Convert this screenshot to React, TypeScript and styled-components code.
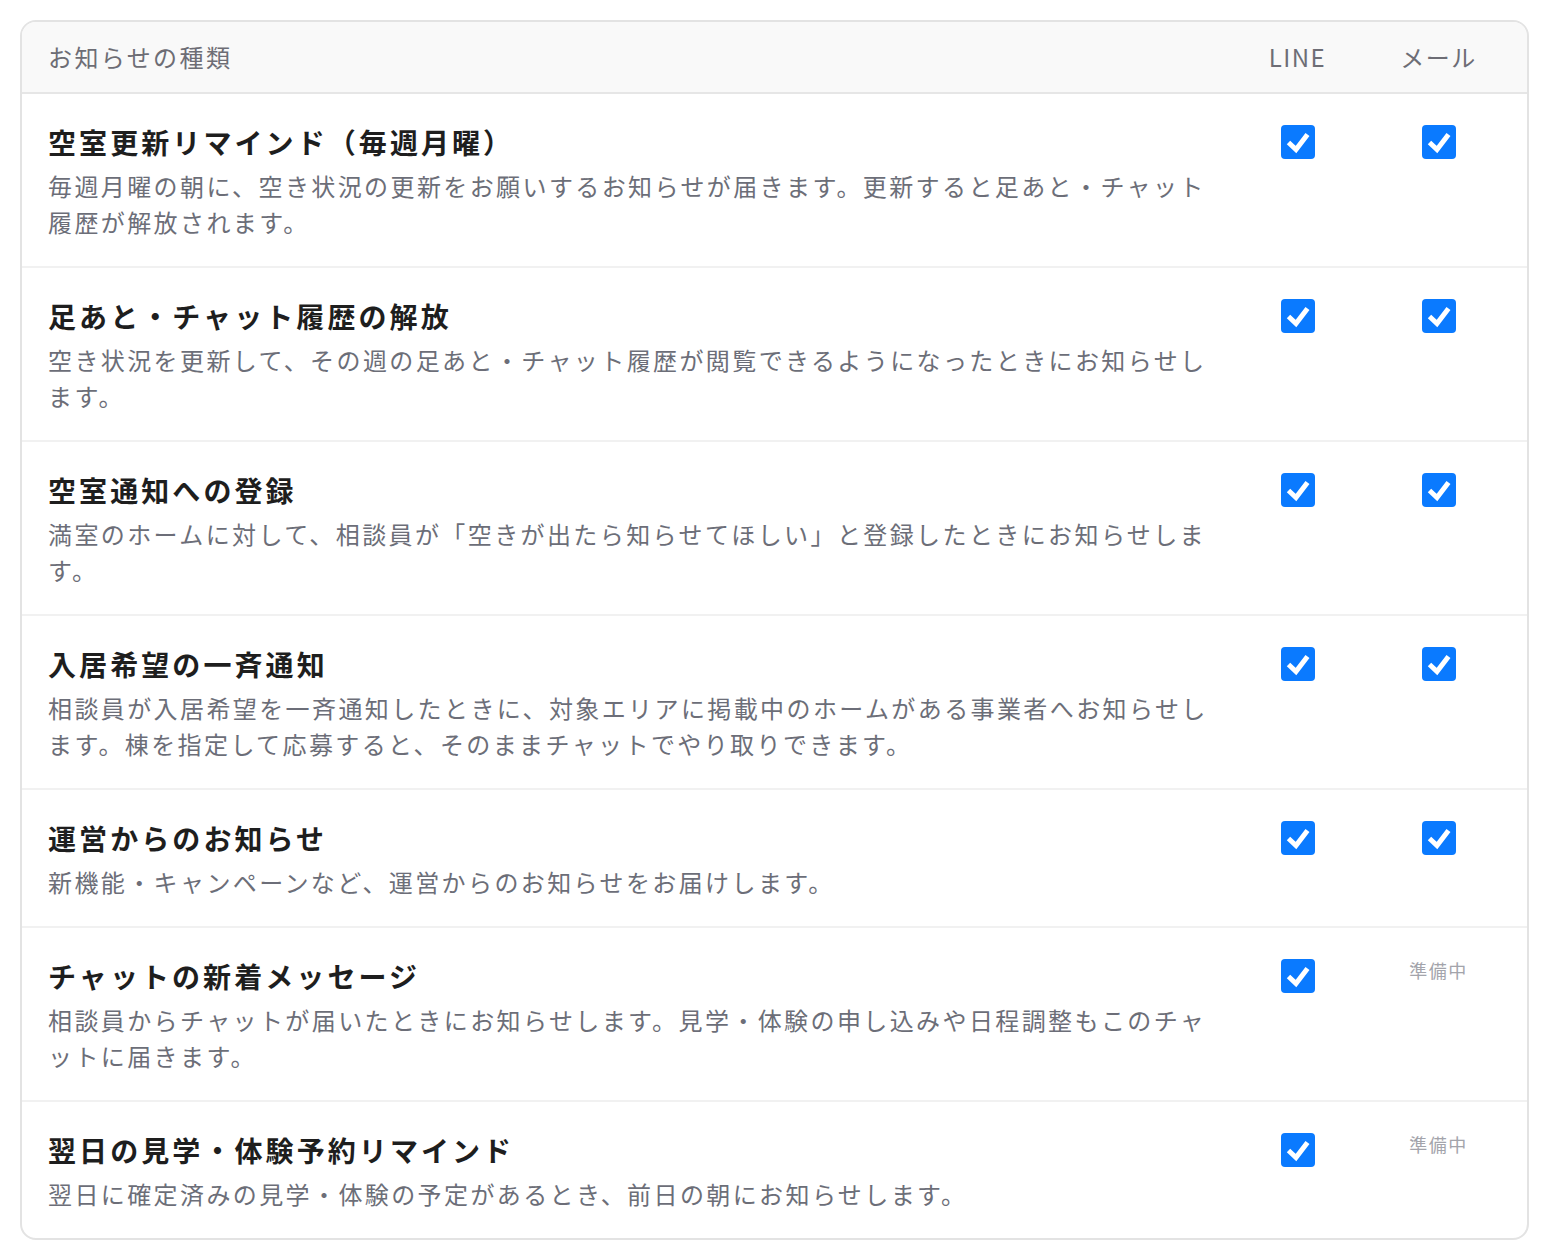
import React from "react";
import styled, { createGlobalStyle } from "styled-components";

const GlobalStyle = createGlobalStyle`
  html, body {
    margin: 0;
    padding: 0;
    background: #ffffff;
  }
  body {
    font-family: "Noto Sans CJK JP", "Noto Sans", sans-serif;
    -webkit-font-smoothing: antialiased;
  }
`;

const Page = styled.div`
  padding: 20px 21px 0 20px;
`;

const Card = styled.div`
  border: 2px solid #e3e3e3;
  border-radius: 16px;
  overflow: hidden;
  background: #ffffff;
`;

const Grid = styled.div`
  display: grid;
  grid-template-columns: 1fr 141px 141px;
  padding: 0 18px 0 26px;
`;

const HeaderRow = styled(Grid)`
  background: #f9f9f9;
  border-bottom: 2px solid #e6e6e6;
  padding-top: 17px;
  padding-bottom: 18px;
`;

const HeaderCell = styled.div<{ $center?: boolean }>`
  font-size: 24px;
  line-height: 35px;
  letter-spacing: ${(p) => (p.$center ? "0.06em" : "0.1em")};
  color: #6d6d75;
  text-align: ${(p) => (p.$center ? "center" : "left")};
`;

const Row = styled(Grid)`
  padding-top: 27px;
  padding-bottom: 26px;
  & + & {
    border-top: 2px solid #f1f1f1;
  }
`;

const Info = styled.div`
  display: flex;
  flex-direction: column;
  gap: 5px;
  min-width: 0;
`;

const Title = styled.div`
  font-size: 28px;
  line-height: 42px;
  font-weight: 700;
  letter-spacing: 0.11em;
  color: #1e1e1e;
`;

const Desc = styled.div`
  font-size: 24px;
  line-height: 36px;
  letter-spacing: 0.1em;
  color: #6c6e78;
  line-break: normal;
`;

const ToggleCell = styled.div`
  display: flex;
  justify-content: center;
  align-items: flex-start;
  padding-top: 4px;
`;

const Box = styled.span`
  display: inline-flex;
  width: 34px;
  height: 34px;
  border-radius: 4px;
  background: #0a7aff;
  align-items: center;
  justify-content: center;
`;

const Pending = styled.span`
  margin-top: -2px;
  font-size: 18px;
  line-height: 26px;
  letter-spacing: 0.08em;
  color: #a3a4ab;
`;

const CheckBox = () => (
  <Box>
    <svg width="34" height="34" viewBox="0 0 34 34">
      <polyline
        points="7.5,17.5 15,24.5 26.5,9.5"
        fill="none"
        stroke="#ffffff"
        strokeWidth="5"
        strokeLinejoin="miter"
      />
    </svg>
  </Box>
);

type Item = {
  title: string;
  desc: string;
  mail: boolean;
};

const items: Item[] = [
  {
    title: "空室更新リマインド（毎週月曜）",
    desc: "毎週月曜の朝に、空き状況の更新をお願いするお知らせが届きます。更新すると足あと・チャット履歴が解放されます。",
    mail: true,
  },
  {
    title: "足あと・チャット履歴の解放",
    desc: "空き状況を更新して、その週の足あと・チャット履歴が閲覧できるようになったときにお知らせします。",
    mail: true,
  },
  {
    title: "空室通知への登録",
    desc: "満室のホームに対して、相談員が「空きが出たら知らせてほしい」と登録したときにお知らせします。",
    mail: true,
  },
  {
    title: "入居希望の一斉通知",
    desc: "相談員が入居希望を一斉通知したときに、対象エリアに掲載中のホームがある事業者へお知らせします。棟を指定して応募すると、そのままチャットでやり取りできます。",
    mail: true,
  },
  {
    title: "運営からのお知らせ",
    desc: "新機能・キャンペーンなど、運営からのお知らせをお届けします。",
    mail: true,
  },
  {
    title: "チャットの新着メッセージ",
    desc: "相談員からチャットが届いたときにお知らせします。見学・体験の申し込みや日程調整もこのチャットに届きます。",
    mail: false,
  },
  {
    title: "翌日の見学・体験予約リマインド",
    desc: "翌日に確定済みの見学・体験の予定があるとき、前日の朝にお知らせします。",
    mail: false,
  },
];

export default function App() {
  return (
    <>
      <GlobalStyle />
      <Page>
        <Card>
          <HeaderRow>
            <HeaderCell>お知らせの種類</HeaderCell>
            <HeaderCell $center>LINE</HeaderCell>
            <HeaderCell $center>メール</HeaderCell>
          </HeaderRow>
          {items.map((item) => (
            <Row key={item.title}>
              <Info>
                <Title>{item.title}</Title>
                <Desc>{item.desc}</Desc>
              </Info>
              <ToggleCell>
                <CheckBox />
              </ToggleCell>
              <ToggleCell>
                {item.mail ? <CheckBox /> : <Pending>準備中</Pending>}
              </ToggleCell>
            </Row>
          ))}
        </Card>
      </Page>
    </>
  );
}
